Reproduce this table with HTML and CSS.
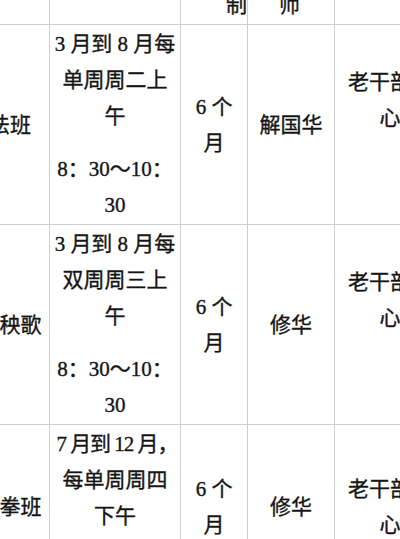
FILE: index.html
```html
<!DOCTYPE html>
<html lang="zh-CN">
<head>
<meta charset="utf-8">
<title>课程安排</title>
<link rel="stylesheet" href="styles.css">
</head>
<body>
<table class="sched">
  <colgroup>
    <col class="c-name">
    <col class="c-time">
    <col class="c-len">
    <col class="c-teacher">
    <col class="c-place">
  </colgroup>
  <tr class="head">
    <td></td>
    <td></td>
    <td class="h-len">制</td>
    <td class="h-teacher">师</td>
    <td></td>
  </tr>
  <tr>
    <td class="name">书法班</td>
    <td class="time"><p>3 月到 8 月每<br>单周周二上<br>午</p><p>8：30～10：<br>30</p></td>
    <td>6 个<br>月</td>
    <td>解国华</td>
    <td class="place raised">老干部中<br>心</td>
  </tr>
  <tr>
    <td class="name">东北秧歌</td>
    <td class="time"><p>3 月到 8 月每<br>双周周三上<br>午</p><p>8：30～10：<br>30</p></td>
    <td>6 个<br>月</td>
    <td>修华</td>
    <td class="place raised">老干部中<br>心</td>
  </tr>
  <tr>
    <td class="name">太极拳班</td>
    <td class="time"><p><span class="tight">7 月到 12 月，</span><br>每单周周四<br>下午</p><p>2：30～4：30</p></td>
    <td>6 个<br>月</td>
    <td>修华</td>
    <td class="place">老干部中<br>心</td>
  </tr>
</table>
</body>
</html>
```
FILE: styles.css
```css
html, body {
  margin: 0;
  padding: 0;
  background: #ffffff;
  overflow: hidden;
}
body {
  width: 400px;
  height: 539px;
  font-family: "Liberation Serif", "Noto Sans CJK SC", serif;
  font-size: 21px;
  color: #151515;
  -webkit-text-stroke: 0.35px #151515;
}
.sched {
  border-collapse: collapse;
  table-layout: fixed;
  width: 496px;
  margin: -15px 0 0 -51px;
}
.c-name { width: 100px; }
.c-time { width: 131px; }
.c-len { width: 67px; }
.c-teacher { width: 87px; }
.c-place { width: 111px; }
.sched td {
  border: 1px solid #cfcfcf;
  padding: 1px 0;
  text-align: center;
  vertical-align: middle;
  line-height: 36px;
  white-space: nowrap;
}
.sched .head td {
  height: 38px;
  padding: 0;
  line-height: 20px;
  vertical-align: middle;
}
.sched .head .h-len {
  text-align: right;
}
.sched .head .h-teacher {
  padding-right: 3px;
}
.time p {
  margin: 0;
}
.time p + p {
  margin-top: 17px;
}
.time .tight {
  letter-spacing: -1px;
  margin-left: 4px;
}
.sched .raised {
  padding-bottom: 50px;
}
```
